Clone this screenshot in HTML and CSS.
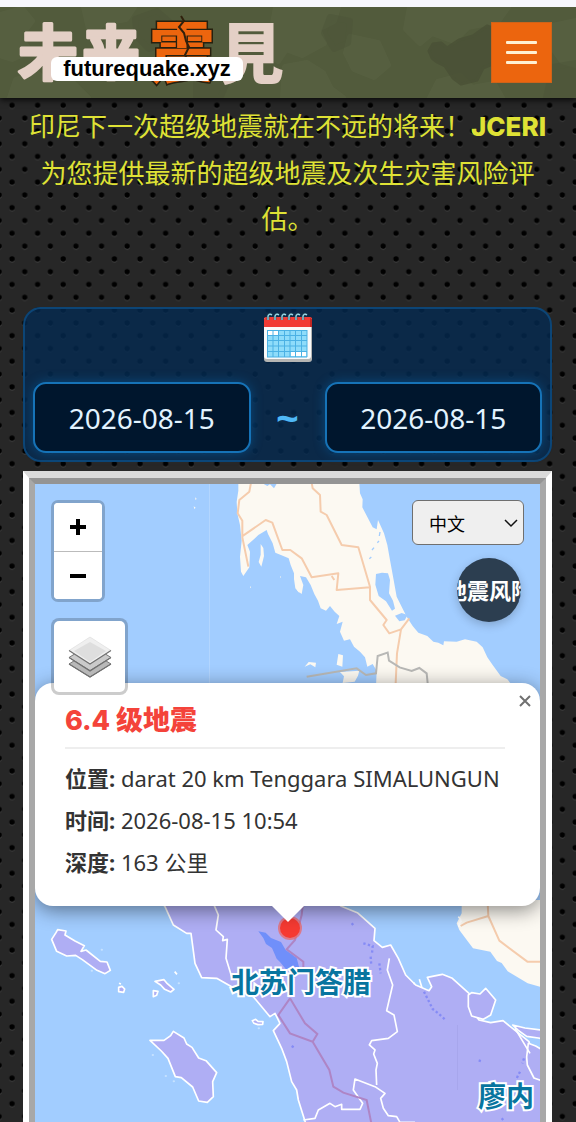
FILE: index.html
```html
<!DOCTYPE html>
<html lang="zh-CN">
<head>
<meta charset="utf-8">
<meta name="viewport" content="width=device-width, initial-scale=1">
<title>未来震見</title>
<link rel="stylesheet" href="styles.css">
</head>
<body>
<header class="topbar">
  <svg class="camo" viewBox="0 0 576 91" preserveAspectRatio="xMidYMid slice" aria-hidden="true">
    <g fill="#5a6344" stroke="#5a6344" stroke-width="6" stroke-linejoin="round" opacity=".6">
      <path d="M0 8L22 2 32 14 20 30 30 44 12 52 0 48zM10 91l6-18 22-6 14 12 20-4 16 16zM84 0h50l-8 12-22 4-14 10zM276 0h62l-4 14-16 8 6 14-22 12-16-6-8 12-10-8zM285 60l22-4 16 10 8 16 12 9h-60zM410 0h98l-10 14-30 6-14 14-22-8-12 10-14-14zM350 30l28 6 10 22-14 12-20-8-8-16zM430 91l8-16 22-6 12 12 22-4 8 14zM548 20l28-6v44l-14-4-10-14z"/>
    </g>
    <path d="M135 12l22-8 14 12-4 20-18 6-12-12zM553 60l23-4v35h-30zM196 72l20-6 10 12-6 13h-24zM330 10l20 4-2 22-14 6-10-16z" fill="#4b5338" stroke="#4b5338" stroke-width="6" stroke-linejoin="round" opacity=".4"/>
    <path d="M429 44l4-7 8-1 6 5 12-8 14-4 14-10 10 4v32l-14 6-6 12-16 4-8-6-8-12-8-4-5-4z" fill="#4a5136" stroke="#4a5136" stroke-width="3" stroke-linejoin="round" opacity=".8"/>
  </svg>
  <a class="logo" href="#" aria-label="未来震見 futurequake.xyz">
    <svg class="logo-art" viewBox="0 0 260 80" width="260" height="80" aria-hidden="true">
      <g class="logo-glyphs">
        <text class="logo-brush" x="-6" y="59" font-size="60">未</text>
        <text class="logo-brush" x="58" y="58" font-size="58">来</text>
        <text class="logo-quake" x="125" y="61" font-size="66">震</text>
        <text x="194" y="62" font-size="66">見</text>
      </g>
      <path class="crack" d="M157 0l3 5-5 6 5 6 2 8 3 6-4 8 4 8-6 8 3 8"/>
    </svg>
    <span class="logo-domain">futurequake.xyz</span>
  </a>
  <button class="menu-button" type="button" aria-label="Menu"><span></span><span></span><span></span></button>
</header>

<main class="page">
  <p class="intro">印尼下一次超级地震就在不远的将来！<strong>JCERI</strong> 为您提供最新的超级地震及次生灾害风险评估。</p>

  <section class="dates" aria-label="日期">
    <svg class="calendar" viewBox="0 0 50 50" width="50" height="50" aria-hidden="true">
      <path d="M1 5h48v41q0 3-3 3H4q-3 0-3-3z" fill="#b5b5b3"/>
      <path d="M1 5h47v38q0 3-3 3H4q-3 0-3-3z" fill="#fafafa"/>
      <path d="M1 14V6q0-2 2-2h44q2 0 2 2v8z" fill="#f23b35"/>
      <path d="M47 5v9h2V6z" fill="#c22724"/>
      <path d="M4 17h40v27H4z" fill="#8edcfa"/>
      <path d="M5 18h10v4H5zM28 39h15v4H28z" fill="#fff"/>
      <path d="M4 17.500h40M4 22.500h40M4 27.500h40M4 33h40M4 38.500h40M4 44h40M4.500 17v27M10 17v27M15.500 17v27M21.500 17v27M27 17v27M32.500 17v27M38.500 17v27M44 17v27" stroke="#4bb1e4" fill="none"/>
      <g fill="none" stroke="#284c59" stroke-width="2.500"><path d="M5 7V3q1-3 4-1M12 7V3q1-3 4-1M19 7V3q1-3 4-1M26 7V3q1-3 4-1M33 7V3q1-3 4-1M40 7V3q1-3 4-1"/></g>
      <g fill="none" stroke="#a1e1f6" stroke-width="1.200"><path d="M5 7V3q1-3 4-1M12 7V3q1-3 4-1M19 7V3q1-3 4-1M26 7V3q1-3 4-1M33 7V3q1-3 4-1M40 7V3q1-3 4-1"/></g>
    </svg>
    <div class="date-row">
      <input class="date-field" type="text" value="2026-08-15" aria-label="开始日期">
      <span class="tilde">~</span>
      <input class="date-field" type="text" value="2026-08-15" aria-label="结束日期">
    </div>
  </section>

  <section class="map-frame" aria-label="地图">
    <div class="map">
      <svg class="map-canvas" viewBox="35 484 505 638" preserveAspectRatio="xMidYMin slice" aria-hidden="true">
        <path d="M35 484h505v638H35z" fill="#a2cdff"/>
        <path d="M209.500 484v200" stroke="#b3d6ff"/>
        <g transform="translate(290 470) scale(.33333)">
          <path class="land" d="M-155 38L-155 62-160 95-158 130-150 165-145 212-150 260-147 305-140 318-122 292-120 245-128 225-105 205-95 195-70 180-66 192-52 220-44 248-20 258-4 265 2 285 12 310 20 340 22 362 35 372 40 345 30 318 48 322 62 345 73 372 84 392 92 415 108 422 120 408 134 425 148 438 140 462 158 455 150 485 162 512 180 508 192 530 210 545 225 562 232 590 248 582 260 602 258 650 670 650 652 628 632 618 608 585 592 562 578 532 560 515 525 508 500 515 462 514 460 526 445 518 430 515 412 498 385 488 368 468 350 440 335 410 320 380 310 325 300 270 292 225 282 190 264 150 260 178 248 172 234 145 217 112 218 88 210 70 208 38z"/>
          <path class="land" d="M-88 222l8 12 2 24-8 32-8-14 6-22zM145 552l14 4-2 34-17-6zM44 590l12-14 22 2-2 14-15-9zM150 606l58-4-4 15-10 18-36 4 4-20zM12 285l10 12-4 16 14 18-4 38-12-14-4-28zM-285 82l5 4-3 5zM-289 109l6 4-4 4zM-120 348l3 4-3 3zM-30 318l3 3-3 3z"/>
          <path fill="#a2cdff" d="M-86 38l18 10 8-5 12 12 10-17zM258 312l18-4 18 2 6 20-3 40 12 22 6 24-9 6-18-28-22-16-10-34zM315 437l20-8 18 6-9 16-16 3z"/>
          <path d="M238 266l6-5M246 240l6-7M262 218l5-5M268 198l2-12" stroke="#a2cdff" stroke-width="4"/>
          <g class="road">
            <path d="M65 38l3 17 22 20 2 50 18 10 45 90 50 7 35 118v40l50 60-10 15 18 25 35-12 25-33M333 478l-12 72-4 90M-145 200l72-50 20 8 30 82h24L35 265 65 322l80-12-5 50 100-8M-117 38l-5 27-30 25-5 40 14 22v50l18 88M125 318l8 12"/>
          </g>
          <path d="M50 620l150-25 28 20 30-5 5-52 30-10 4 24 32 20 36 11 23-9 22 16 3 30" fill="none" stroke="#b8b8b6" stroke-width="6"/>
        </g>
        <g transform="translate(20 890) scale(.33333)">
          <path class="land" d="M1325 30v40l-15 30 8 20 15 20 26 35 52 10 20 28 14 6 18 25 60 36 50 14V30z"/>
          <path class="road" d="M1322 108l18-10 65-20-2-40M1405 78l33 74 84 63h50"/>
          <path d="M1315 80l7 8-6 22M1325 92l-10 10" class="shore"/>
          <path class="province" d="M415 20L435 50l25 55 40 25h13l12 90 20 43 45 2 45 25 65 30 50 60 15-10 15 30-20 22 25 53 15 40 15 60 15 25 5 30 22 70v20h740V580l-20-15-25-35-15-40-10-35-78-63-37 6-35-8-15-20-15-60-50-45-30-12-45 9 13 28-8 12-40-17-30-30-22-50-23-40-25 7-25-20 3-37-53-47-50-20-50-48z"/>
          <path class="province" d="M1345 315l10-7 25 4 17-17 30 35-15 45-22 13-35-10-10-28zM1478 405l37 9 65 8v28l-25-6-35-5-25-18zM1525 460l22 8 35 20v90l-40-14-20-39-2-24zM95 148l13-20 5-9 25 4-3 12 30 18 28 14-10 17 15-4 43 34 20 2 10 25-16 10-24-10-44-32-20-13-27 2-30-14zM390 451h42l20-14 8-13 32 20 8 18 16 10 20 32 22 8 32 36-12 27 2 45-18 17-26-4-18-42-34-28-18-3-22-55-20-22zM405 274l27-5 10 12 20 17-10 8-18-8-12-13zM296 292l10-3 8 8-3 10-15-2zM400 302l14 2-4 12-10 4zM697 392l10-4 7 6 15 1-1 8-14 1-12-4z"/>
          <path fill="#708ffa" d="M715 124l22 4 16 16 30 12 14 24 33 24 8 30-40 4-18-22-10-10-14-32-18-12-8-18z"/>
          <path class="shore" d="M580 40l15 35-7 45 22 20-2 12 14-4-4 57 20 65M1108 205l-6 35 16 45-18 77 22 13 4 20 6 30-27 20-50 7-7 13 17 15-4 12 11 28-4 20 2 45M850 690l35-5 10-25 35-20 15 10 20-7v15h55l8-18-28-40 5-33 60 23 30 20-13 15 8 30 15 22 25 3 10 17h45M1198 268l8 25M1182 278l2 5M297 280l6 2M464 245l7 8M1485 415l45 75"/>
          <g fill="none" stroke="#ae85c5" stroke-width="6"><path d="M850 30l-5 45-20 75-25 28 50 37v30M810 325l45 75 37 32-14 23-68-25-35-55 35-50M878 455l50 85 12 50 30 18 70 22 15 75"/></g>
          <path d="M1030 160l28 8-2 22M1052 200l2 28M1078 220l4 30M1212 305l26 52 18 14 22 20M1376 511l12 4M1512 505l-5 15M995 100l7 8M1500 545l-10 20M1450 685l-8 7M815 468l8 5" fill="none" stroke="#858bf5" stroke-width="7" stroke-dasharray="7 7"/>
          <path d="M245 179h1M215 242h1M437 558h1M461 574h1M398 495h1M716 415h1M476 280h1" stroke="#c7e2ff" stroke-width="6" stroke-linecap="round"/>
        </g>
        <path d="M457.500 1025v65" stroke="#a7a6ec"/>
        <circle cx="290" cy="928" r="12" fill="#ef645f" opacity=".7"/>
        <circle cx="290" cy="928" r="10" fill="#f63a32"/>
        <g class="region-label"><text x="301" y="993">北苏门答腊</text><text x="506" y="1107">廖内</text></g>
      </svg>

      <article class="popup">
        <button class="popup-close" type="button" aria-label="关闭"><svg viewBox="0 0 12 12" width="12" height="12"><path d="M1 1l10 10M11 1L1 11"/></svg></button>
        <h2 class="popup-title">6.4 级地震</h2>
        <p class="popup-line"><strong>位置:</strong> darat 20 km Tenggara SIMALUNGUN</p>
        <p class="popup-line"><strong>时间:</strong> 2026-08-15 10:54</p>
        <p class="popup-line"><strong>深度:</strong> 163 公里</p>
      </article>

      <div class="controls controls-left">
        <div class="zoom">
          <button class="zoom-button" type="button" aria-label="放大"><svg viewBox="0 0 18 18" width="18" height="18"><path d="M9 1v16M1 9h16"/></svg></button>
          <button class="zoom-button" type="button" aria-label="缩小"><svg viewBox="0 0 18 18" width="18" height="18"><path d="M1 9h16"/></svg></button>
        </div>
        <button class="layers" type="button" aria-label="图层">
          <svg viewBox="0 0 44 42" width="44" height="42">
            <g stroke="#777" stroke-width="1"><path d="M1 28l21-13 21 13-21 13z" fill="#b8b8b8"/><path d="M1 21.500l21-13 21 13-21 13z" fill="#cacaca"/></g>
            <path d="M1 14.500L22 1l21 13.500L22 28z" fill="#efefef" stroke="#d5d5d5" stroke-width=".5"/>
            <path d="M6 15l16-9 16 9-16 11z" fill="#dedede"/>
            <path d="M1 14.500L22 28l21-13.500M1 21.500L22 35l21-13.500M1 28l21 13 21-13" fill="none" stroke="#717171" stroke-width="1.200"/>
          </svg>
        </button>
      </div>

      <div class="controls controls-right">
        <div class="language">
          <select class="language-select" aria-label="语言"><option>中文</option><option>English</option></select>
          <svg class="language-arrow" viewBox="0 0 14 9" width="14" height="9" aria-hidden="true"><path d="M1 1l6 6 6-6"/></svg>
        </div>
        <button class="risk" type="button"><span>地震风险</span></button>
      </div>
    </div>
  </section>
</main>
</body>
</html>
```
FILE: styles.css
```css
* { box-sizing: border-box; }

body {
  margin: 0;
  height: 100vh;
  overflow: hidden;
  display: flex;
  flex-direction: column;
  font-family: "Noto Sans", "Noto Sans CJK SC", sans-serif;
  background: #272727 url("data:image/svg+xml,%3Csvg xmlns='http://www.w3.org/2000/svg' width='128' height='128'%3E%3Cdefs%3E%3Cpattern id='p' width='25.6' height='25.6' patternUnits='userSpaceOnUse'%3E%3Cg fill='%23404040'%3E%3Ccircle cx='12' cy='4' r='2.7'/%3E%3Ccircle cx='24.8' cy='16.8' r='2.7'/%3E%3Ccircle cx='-.8' cy='16.8' r='2.7'/%3E%3C/g%3E%3Ccircle cx='12' cy='3' r='2.7'/%3E%3Ccircle cx='24.8' cy='15.8' r='2.7'/%3E%3Ccircle cx='-.8' cy='15.8' r='2.7'/%3E%3C/pattern%3E%3C/defs%3E%3Crect width='128' height='128' fill='url(%23p)'/%3E%3C/svg%3E");
}

button { padding: 0; border: 0; cursor: pointer; font-family: inherit; }

/* Header */
.topbar {
  position: relative;
  flex: none;
  display: flex;
  justify-content: space-between;
  align-items: center;
  height: 98px;
  padding: 8px 24px 2px;
  border-top: 7px solid #f7f7fd;
  background: #525b3c;
  box-shadow: 0 2px 6px #000c;
}
.camo { position: absolute; inset: 0; width: 100%; height: 100%; }
.logo { position: relative; display: block; height: 80px; }
.logo-art { display: block; overflow: visible; }
.logo-glyphs {
  font-family: "Noto Sans CJK JP", sans-serif;
  font-weight: 900;
  fill: #e4d0c6;
}
.logo-brush { font-weight: 700; stroke: #e4d0c6; stroke-width: 3; stroke-linejoin: round; }
.logo-quake { fill: #ec650e; stroke: #27200f; stroke-width: 3; paint-order: stroke; }
.crack { fill: none; stroke: #30200c; stroke-width: 2; }
.logo-domain {
  position: absolute;
  left: 27px;
  top: 41px;
  width: 192px;
  border-radius: 6px;
  background: #fff;
  color: #000;
  font: bold 22px/24px "Liberation Sans", Arial, sans-serif;
  text-align: center;
}
.menu-button {
  position: relative;
  display: flex;
  flex-direction: column;
  align-items: center;
  justify-content: center;
  gap: 7px;
  width: 61px;
  height: 61px;
  margin-bottom: 6px;
  border: 1px solid #cf6319;
  background: #ec650e;
}
.menu-button span { width: 31px; height: 3px; border-radius: 1px; background: #fff0d2; }

/* Intro */
.page { flex: 1; min-height: 0; display: flex; flex-direction: column; padding: 5px 24px 0 23px; }
.intro {
  margin: 0 0 65px;
  color: #dfe235;
  font-size: 26px;
  line-height: 46px;
  text-align: center;
}
.intro strong { font-family: Inter, sans-serif; font-weight: 800; }

/* Dates */
.dates {
  flex: none;
  display: flex;
  flex-direction: column;
  align-items: center;
  gap: 19px;
  padding: 4px 8px 7px;
  margin: 0 0 9px;
  border: 2px solid #0c4576;
  border-radius: 18px;
  background: #052a50d0;
}
.calendar { display: block; }
.date-row { display: flex; align-items: center; width: 100%; }
.date-field {
  flex: 1;
  min-width: 0;
  height: 71px;
  padding: 0;
  border: 2px solid #1673b7;
  border-radius: 13px;
  background: #00162d;
  box-shadow: 0 0 12px #087acb66;
  color: #e2f3ff;
  font: 28px "Noto Sans", sans-serif;
  text-align: center;
}
.tilde { width: 74px; color: #4fb8f6; font-size: 40px; font-weight: bold; line-height: 48px; text-align: center; }

/* Map */
.map-frame {
  flex: 1;
  min-height: 0;
  display: flex;
  border: 7px solid #fff;
  border-width: 7px 6px 0 6px;
  border-top-color: #dadada;
}
.map {
  position: relative;
  flex: 1;
  overflow: hidden;
  border: 6px solid #a8a8a8;
  border-bottom: 0;
  border-top-color: #949494;
}
.map-canvas { position: absolute; inset: 0; width: 100%; height: 100%; }
.land { fill: #fcf9f2; }
.road { fill: none; stroke: #f5ccad; stroke-width: 6; stroke-linejoin: round; }
.province { fill: #afaef4; stroke: #fff; stroke-width: 5; stroke-linejoin: round; }
.shore { fill: none; stroke: #fff; stroke-width: 5; stroke-linejoin: round; }
.region-label {
  font: bold 28px "Noto Sans CJK SC", sans-serif;
  fill: #08759f;
  stroke: #fff;
  stroke-width: 4;
  paint-order: stroke;
  text-anchor: middle;
}

/* Map controls */
.controls { position: absolute; top: 16px; display: flex; flex-direction: column; }
.controls-left { left: 16px; gap: 16px; align-items: flex-start; }
.controls-right { right: 16px; gap: 13px; align-items: flex-end; }
.zoom { border: 3px solid #0003; border-radius: 7px; background: #fff; background-clip: padding-box; overflow: hidden; }
.zoom-button { display: grid; place-items: center; width: 48px; height: 48px; background: #fff; }
.zoom-button + .zoom-button { border-top: 1px solid #bbb; }
.zoom-button path { stroke: #000; stroke-width: 4; }
.layers {
  display: grid;
  place-items: center;
  width: 77px;
  height: 77px;
  border: 3px solid #0003;
  border-radius: 8px;
  background: #fff;
  background-clip: padding-box;
}
.language { position: relative; width: 112px; height: 45px; }
.language-select {
  appearance: none;
  width: 100%;
  height: 100%;
  padding: 0 16px;
  border: 1px solid #6f6f6f;
  border-radius: 6px;
  background: #efefef;
  color: #000;
  font: 18px "Noto Sans CJK SC", sans-serif;
}
.language-arrow { position: absolute; right: 6px; top: 19px; pointer-events: none; fill: none; stroke: #111; stroke-width: 1.5; }
.risk {
  display: flex;
  align-items: center;
  justify-content: center;
  width: 64px;
  height: 64px;
  margin-right: 3px;
  border-radius: 50%;
  overflow: hidden;
  background: #2c3e50;
  box-shadow: 0 3px 10px #0003;
  color: #fff;
  font-size: 22px;
  font-weight: bold;
  line-height: 28px;
}
.risk span { flex: none; white-space: nowrap; }

/* Popup */
.popup {
  position: absolute;
  top: 199px;
  left: 0;
  right: 0;
  height: 223px;
  padding: 18px 35px 18px 30px;
  border-radius: 18px;
  background: #fff;
  box-shadow: 0 4px 20px #0007;
  color: #333;
}
.popup::after {
  content: "";
  position: absolute;
  left: 50%;
  top: 100%;
  margin-left: -16px;
  border: 16px solid transparent;
  border-top-color: #fff;
  border-bottom: 0;
}
.popup-title {
  margin: 0 0 8px;
  padding-bottom: 6px;
  border-bottom: 2px solid #eee;
  color: #f4433a;
  font: 800 27px/40px Inter, "Noto Sans CJK SC", sans-serif;
}
.popup-line { margin: 0; font-size: 22px; line-height: 42px; white-space: nowrap; }
.popup-close { position: absolute; top: 12px; right: 9px; display: block; background: none; }
.popup-close svg { display: block; fill: none; stroke: #707070; stroke-width: 2; }
```
